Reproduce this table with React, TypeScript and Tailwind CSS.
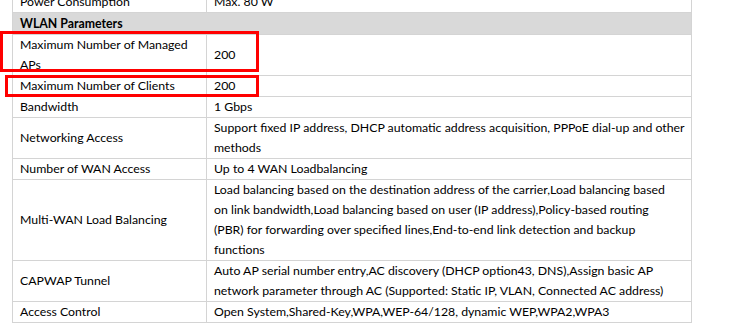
import React from "react"

// lines are broken where the source document breaks them
type Row = { label: string[]; value: string[] }

const rows: Row[] = [
  { label: ["Maximum Number of Managed", "APs"], value: ["200"] },
  { label: ["Maximum Number of Clients"], value: ["200"] },
  { label: ["Bandwidth"], value: ["1 Gbps"] },
  {
    label: ["Networking Access"],
    value: ["Support fixed IP address, DHCP automatic address acquisition, PPPoE dial-up and other", "methods"],
  },
  { label: ["Number of WAN Access"], value: ["Up to 4 WAN Loadbalancing"] },
  {
    label: ["Multi-WAN Load Balancing"],
    value: [
      "Load balancing based on the destination address of the carrier,Load balancing based",
      "on link bandwidth,Load balancing based on user (IP address),Policy-based routing",
      "(PBR) for forwarding over specified lines,End-to-end link detection and backup",
      "functions",
    ],
  },
  {
    label: ["CAPWAP Tunnel"],
    value: [
      "Auto AP serial number entry,AC discovery (DHCP option43, DNS),Assign basic AP",
      "network parameter through AC (Supported: Static IP, VLAN, Connected AC address)",
    ],
  },
  { label: ["Access Control"], value: ["Open System,Shared-Key,WPA,WEP-64/128, dynamic WEP,WPA2,WPA3"] },
]

function Lines({ lines }: { lines: string[] }) {
  return (
    <>
      {lines.map((l, i) => (
        <div key={i} className="whitespace-nowrap">{l}</div>
      ))}
    </>
  )
}

export default function App() {
  return (
    <div className="relative h-[323px] w-[729px] overflow-hidden bg-white text-[12.3px] leading-[20px] text-black" style={{ fontFamily: "Lato, 'Liberation Sans', sans-serif" }}>
      {/* spec table — first row scrolled off the top */}
      <table className="ml-[12px] mt-[-9px] w-[680px] table-fixed border-collapse">
        <colgroup>
          <col className="w-[194px]" />
          <col />
        </colgroup>
        <tbody>
          <tr>
            <td className="border border-[#d4d4d4] px-[7px] align-middle">Power Consumption</td>
            <td className="border border-[#d4d4d4] px-[7px] align-middle">Max. 80 W</td>
          </tr>
          <tr className="bg-[#d9d9d9]">
            <td colSpan={2} className="h-[22px] border border-[#d4d4d4] px-[7px] font-bold">WLAN Parameters</td>
          </tr>
          {rows.map(r => (
            <tr key={r.label[0]}>
              <td className="border border-[#d4d4d4] px-[7px] align-middle"><Lines lines={r.label} /></td>
              <td className="border border-[#d4d4d4] px-[7px] align-middle"><Lines lines={r.value} /></td>
            </tr>
          ))}
        </tbody>
      </table>

      {/* red highlight boxes */}
      <div className="absolute left-0 top-[31px] h-[41px] w-[259px] border-[3px] border-[#ff0000]" />
      <div className="absolute left-[5px] top-[75px] h-[22px] w-[254px] border-[3px] border-[#ff0000]" />
    </div>
  )
}
